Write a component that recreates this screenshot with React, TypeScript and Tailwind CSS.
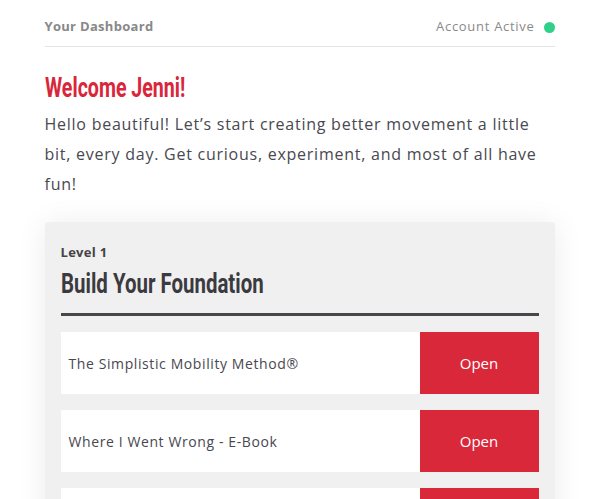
import React from 'react';

const items = [
  'The Simplistic Mobility Method®',
  'Where I Went Wrong - E-Book',
  'Mobility Basics',
];

// condensed display face stand-in: Roboto bold squeezed horizontally
const heading = "inline-block origin-left whitespace-nowrap font-['Roboto',sans-serif] font-bold";

export default function App() {
  return (
    <div className="min-h-screen bg-white font-['Open_Sans',sans-serif]">
      <div className="mx-auto w-[510px]">
        {/* top bar */}
        <div className="flex h-[47px] items-center justify-between border-b border-[#e4e4e4] pt-[8px]">
          <span className="text-[13px] font-bold tracking-[0.3px] text-[#888]">Your Dashboard</span>
          <span className="flex items-center gap-[9px] text-[13px] tracking-[0.7px] text-[#8a8a8a]">
            Account Active
            <span className="h-[11px] w-[11px] rounded-full bg-[#2fd189]" />
          </span>
        </div>

        <h1 className="mt-[22px] h-[34px] text-[28px] leading-[34px] text-[#d9263a]">
          <span className={`${heading} scale-x-[0.7]`}>Welcome Jenni!</span>
        </h1>
        <p className="mt-[6px] text-[16px] leading-[30px] tracking-[0.75px] text-[#484850]">
          Hello beautiful! Let’s start creating better movement a little bit, every day. Get curious,
          experiment, and most of all have fun!
        </p>

        {/* level card */}
        <div className="mt-[23px] rounded-[4px] bg-[#f0f0f0] px-4 pt-5 pb-4 shadow-[0_2px_30px_rgba(0,0,0,0.08)]">
          <div className="text-[13px] font-bold leading-5 tracking-[0.3px] text-[#444]">Level 1</div>
          <h2 className="mt-[3px] h-[51px] border-b-[3px] border-[#46464b] pb-[14px] text-[28px] leading-[34px] text-[#3a3a40]">
            <span className={`${heading} scale-x-[0.73]`}>Build Your Foundation</span>
          </h2>
          <div className="mt-4 flex flex-col gap-4">
            {items.map((t) => (
              <div key={t} className="flex h-[62px] bg-white">
                <div className="flex flex-1 items-center px-2 text-[14px] tracking-[0.6px] text-[#484850]">{t}</div>
                <button className="w-[119px] bg-[#d9283a] text-[15px] font-medium text-white">Open</button>
              </div>
            ))}
          </div>
        </div>
      </div>
    </div>
  );
}
